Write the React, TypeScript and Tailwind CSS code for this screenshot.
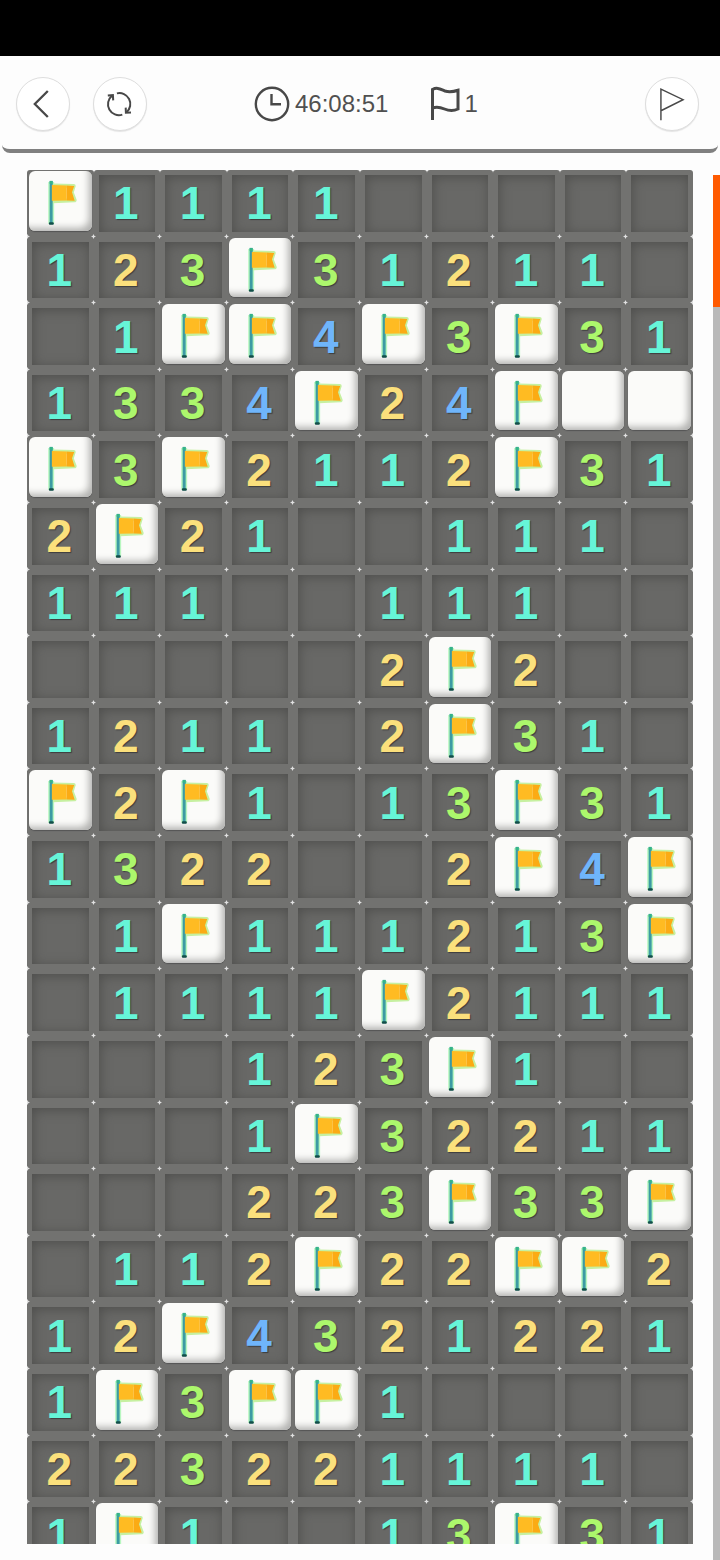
import { useState } from "react";
import clsx from "clsx";

// "." opened and empty, "#" still covered, "F" flagged, digit = neighbouring mines
const ROWS = [
  "F1111.....",
  "123F31211.",
  ".1FF4F3F31",
  "1334F24F##",
  "F3F2112F31",
  "2F21..111.",
  "111..111..",
  ".....2F2..",
  "1211.2F31.",
  "F2F1.13F31",
  "1322..2F4F",
  ".1F111213F",
  ".1111F2111",
  "...123F1..",
  "...1F32211",
  "...223F33F",
  ".112F22FF2",
  "12F4321221",
  "1F3FF1....",
  "223221111.",
  "1F1..13F31",
];

const DIGIT_COLOR: Record<string, string> = {
  "1": "text-[#66f5d8]",
  "2": "text-[#fbe07c]",
  "3": "text-[#acf76c]",
  "4": "text-[#6fb5fb]",
};

function BackIcon() {
  return (
    <svg width="54" height="54" viewBox="0 0 54 54" fill="none" stroke="#484848" strokeWidth="2.4" aria-hidden="true">
      <path d="M32 13.500 18.500 27 32 40.500" />
    </svg>
  );
}

function RestartIcon() {
  return (
    <svg width="28" height="28" viewBox="0 0 28 28" fill="none" stroke="#484848" strokeWidth="2" aria-hidden="true">
      <path d="M10.9 3.4A10.9 10.9 0 0 1 20.6 22.2" />
      <path d="M16.3 24.6A10.9 10.9 0 0 1 6 5.8" />
      <path d="M25 22.6 19.9 22.8 19.7 17.6" />
      <path d="M1.8 5.6 6.9 5.2 7.2 10.4" />
    </svg>
  );
}

function ClockIcon() {
  return (
    <svg width="36" height="36" viewBox="0 0 36 36" fill="none" stroke="#484848" strokeWidth="2.4" aria-hidden="true">
      <circle cx="18" cy="18" r="16.2" />
      <path d="M17.500 8V18.200H27" />
    </svg>
  );
}

function MineFlagIcon() {
  return (
    <svg width="32" height="36" viewBox="0 0 32 36" fill="none" stroke="#484848" strokeWidth="3" aria-hidden="true">
      <path d="M4.500 34V3.500C9 1 12 3 17 5 22 6.500 26 5.500 30 4.200V23C25 25.500 21 25 16.500 23 12 21 8 20.500 4.500 22" />
    </svg>
  );
}

function PennantIcon() {
  return (
    <svg width="54" height="54" viewBox="0 0 54 54" fill="none" stroke="#484848" strokeWidth="1.5" aria-hidden="true">
      <path d="M15.500 44V11.500L38.500 22.500 15.500 34" />
    </svg>
  );
}

function FlagArt() {
  return (
    <svg viewBox="0 0 63 60" className="size-full" aria-hidden="true">
      <g fill="none" strokeLinejoin="round">
        <path d="M22.300 11V53" stroke="#b8f7c0" strokeWidth="6" />
        <path d="M24 14.500 45 15 43 21.500 46 29.500 24 30.500Z" stroke="#c6f0a0" strokeWidth="4" />
      </g>
      <rect x="20.800" y="10" width="3" height="43.500" fill="#3c9ba3" />
      <rect x="20" y="51.500" width="5" height="2.500" rx="1" fill="#124f48" />
      <rect x="20.800" y="10" width="3" height="3" fill="#35b587" />
      <path d="M23 14 38 14.500V29.800L23 30Z" fill="#ffbb22" />
      <path d="M38 14.500 45.500 15 43.300 21.500 46 30 38 29.800Z" fill="#fbab14" />
    </svg>
  );
}

function Spark({ className }: { className: string }) {
  return (
    <span className={clsx("pointer-events-none absolute z-10 size-[5px] opacity-85", className)}>
      <svg viewBox="0 0 5 5" className="block size-full" fill="#f4f4f4" aria-hidden="true">
        <path d="M2.500 0 3.300 1.700 5 2.500 3.300 3.300 2.500 5 1.700 3.300 0 2.500 1.700 1.700Z" />
      </svg>
    </span>
  );
}

function RoundButton({ label, pressed, onClick, children }: {
  label: string;
  pressed?: boolean;
  onClick?: () => void;
  children: React.ReactNode;
}) {
  return (
    <button
      type="button"
      aria-label={label}
      aria-pressed={pressed}
      onClick={onClick}
      className="flex size-[54px] shrink-0 items-center justify-center rounded-full border border-[#dedede] bg-white shadow-[0_1px_1px_#e4e4e4]"
    >
      {children}
    </button>
  );
}

function Cell({ value, row, col }: { value: string; row: number; col: number }) {
  const raised = value === "F" || value === "#";
  const state = value === "F" ? "flagged" : value === "#" ? "covered" : value === "." ? "empty" : value;
  return (
    <div
      className={clsx(
        "relative aspect-square bg-[#727270]",
        raised ? "pt-px pr-[2px] pb-[6px] pl-[2px]" : "p-[5px]",
        row === 0 && "rounded-t-[3px]",
      )}
    >
      <button
        type="button"
        aria-label={`Row ${row + 1}, column ${col + 1}: ${state}`}
        className={clsx(
          "flex size-full items-center justify-center overflow-hidden",
          raised
            ? "rounded-[6px] bg-[#fbfbf9] shadow-[inset_-6px_-6px_7px_-3px_#b2b2b0,0_1px_1px_#555555]"
            : "bg-[#686866] pr-[2px] text-[46px] leading-none font-bold shadow-[inset_1px_2px_12px_#4e4e4c] [text-shadow:1px_1px_1px_#3d3d3d]",
          DIGIT_COLOR[value],
        )}
      >
        {value === "F" && <FlagArt />}
        {DIGIT_COLOR[value] && value}
      </button>
      <Spark className="-right-[2px] -bottom-[2px]" />
      {col === 0 && <Spark className="-bottom-[2px] -left-[2px]" />}
    </div>
  );
}

export default function App() {
  const [flagMode, setFlagMode] = useState(false);

  return (
    <div className="flex h-screen flex-col bg-[#fdfdfd] font-['Liberation_Sans',Arial,sans-serif] text-[#505050]">
      <div className="h-14 shrink-0 bg-black" />

      <header className="mx-[2px] flex shrink-0 items-center rounded-b-[8px] border-b-4 border-[#808080] pt-[21px] pr-[19px] pb-[18px] pl-[14px]">
        <nav className="flex gap-[23px]">
          <RoundButton label="Back"><BackIcon /></RoundButton>
          <RoundButton label="Restart"><RestartIcon /></RoundButton>
        </nav>
        <div className="ml-[107px] flex items-center text-2xl">
          <ClockIcon />
          <span className="ml-[5px]">46:08:51</span>
          <span className="ml-10 flex items-center gap-1">
            <MineFlagIcon />
            1
          </span>
        </div>
        <div className="ml-auto">
          <RoundButton label="Flag mode" pressed={flagMode} onClick={() => setFlagMode(!flagMode)}>
            <PennantIcon />
          </RoundButton>
        </div>
      </header>

      <main className="flex min-h-0 flex-1">
        <div className="flex min-w-0 flex-1 flex-col pt-[17px] pr-5 pb-4 pl-[27px]">
          <div className="min-h-0 flex-1 overflow-x-hidden overflow-y-auto [scrollbar-width:none]">
            <div className="grid grid-cols-10">
              {ROWS.map((line, row) =>
                line.split("").map((value, col) => (
                  <Cell key={`${row}-${col}`} value={value} row={row} col={col} />
                )),
              )}
            </div>
          </div>
        </div>
        {/* scroll position of the board */}
        <div className="mt-[22px] w-[7px] shrink-0 bg-[#b9b9b9]">
          <div className="h-[9.5%] bg-[#ff5a00]" />
        </div>
      </main>
    </div>
  );
}
